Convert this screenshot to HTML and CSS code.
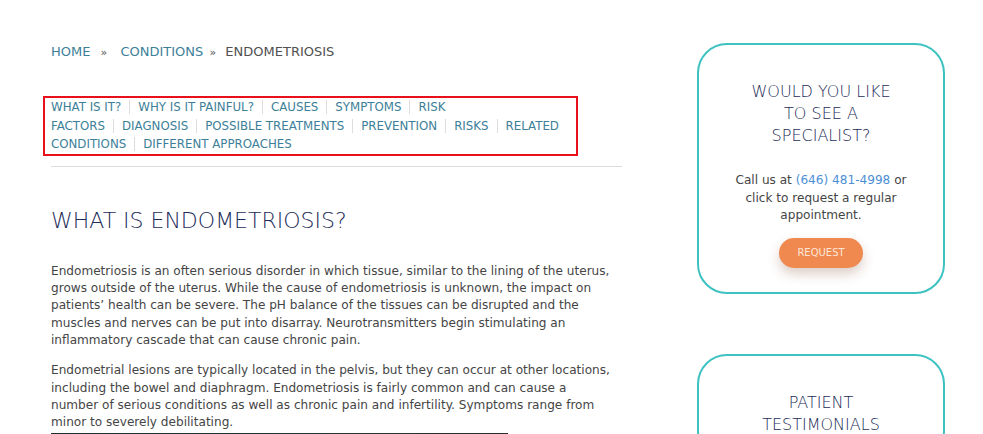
FILE: index.html
```html
<!DOCTYPE html>
<html>
<head>
    <link rel="stylesheet" href="styles.css">
</head>
<body>
    <div class="page">
        <div class="main">
            <div class="breadcrumb">
                <a href="#">Home</a>
                <span class="sep first">&raquo;</span>
                <a href="#">Conditions</a>
                <span class="sep">&raquo;</span>
                <span class="current">Endometriosis</span>
            </div>

            <div class="toc">
                <a href="#">What is it?</a><a href="#">Why is it painful?</a><a href="#">Causes</a><a href="#">Symptoms</a><a href="#">Risk Factors</a><a href="#">Diagnosis</a><a href="#">Possible Treatments</a><a href="#">Prevention</a><a href="#">Risks</a><a href="#">Related Conditions</a><a href="#">Different Approaches</a>
            </div>

            <h1>What is Endometriosis?</h1>

            <p>Endometriosis is an often serious disorder in which tissue, similar to the lining of the uterus, grows outside of the uterus. While the cause of endometriosis is unknown, the impact on patients&rsquo; health can be severe. The pH balance of the tissues can be disrupted and the muscles and nerves can be put into disarray. Neurotransmitters begin stimulating an inflammatory cascade that can cause chronic pain.</p>

            <p>Endometrial lesions are typically located in the pelvis, but they can occur at other locations, including the bowel and diaphragm. Endometriosis is fairly common and can cause a number of serious conditions as well as chronic pain and infertility. Symptoms range from minor to severely debilitating.</p>

            <div class="video"></div>
        </div>

        <div class="sidebar">
            <div class="card">
                <h3>Would you like to see a specialist?</h3>
                <p>Call us at <a href="#">(646) 481-4998</a> or click to request a regular appointment.</p>
                <a class="btn" href="#">Request</a>
            </div>
            <div class="card">
                <h3>Patient Testimonials</h3>
            </div>
        </div>
    </div>
</body>
</html>
```

FILE: styles.css
```css
body {
    margin: 0;
    font-family: "DejaVu Sans", sans-serif;
    color: #454545;
    background: #fff;
}
a {
    text-decoration: none;
}
.page {
    display: flex;
    gap: 75px;
    padding: 43px 38px 0 51px;
}
.main {
    width: 571px;
    flex-shrink: 0;
}
.breadcrumb {
    padding-top: 1px;
    font-size: 13px;
    text-transform: uppercase;
    line-height: 16px;
}
.breadcrumb a {
    color: #3d7f99;
}
.breadcrumb .sep {
    margin: 0 5px 0 2px;
    font-size: 11px;
    color: #555;
}
.breadcrumb .sep.first {
    margin: 0 9px 0 6px;
}
.breadcrumb .current {
    color: #505050;
}
.toc {
    margin: 35px 0 0 -8px;
    padding: 0 6px;
    width: 519px;
    border: 2px solid #e8101a;
    font-size: 11.8px;
    line-height: 18.5px;
    text-transform: uppercase;
}
.toc a {
    color: #3d7f99;
    padding-right: 8px;
    margin-right: 8px;
    border-right: 1px solid #ddd;
}
.toc a:last-child {
    border-right: none;
}
h1 {
    margin: 10px 0 0;
    padding-top: 40px;
    border-top: 1px solid #ddd;
    font-size: 22px;
    font-weight: 300;
    color: #1d2c58;
    text-transform: uppercase;
    line-height: 27px;
}
.main p {
    font-size: 12.1px;
    line-height: 17.4px;
    margin: 29px 0 0;
    padding-right: 6px;
}
.main p + p {
    margin-top: 12.6px;
}
.video {
    margin-top: 1px;
    width: 457px;
    height: 20px;
    background: linear-gradient(90deg, #1d2b2f 0%, #233338 60%, #2c2f33 62%, #2a2c30 100%);
}
.sidebar {
    display: flex;
    flex-direction: column;
    gap: 60px;
    width: 248px;
}
.card {
    border: 2px solid #3ec2c1;
    border-radius: 30px;
    padding: 36px 30px 24px;
    text-align: center;
}
.card h3 {
    margin: 0 14px;
    font-size: 16px;
    font-weight: 300;
    line-height: 22px;
    color: #1d2c58;
    text-transform: uppercase;
}
.card p {
    margin: 25px 0 0;
    font-size: 12.1px;
    line-height: 17.5px;
}
.card p a {
    color: #4d8fd6;
}
.btn {
    display: inline-block;
    margin-top: 13px;
    padding: 0 18px;
    line-height: 30px;
    border-radius: 15px;
    background: #f0894f;
    color: #fde6d8;
    font-size: 10px;
    text-transform: uppercase;
    box-shadow: 0 6px 12px rgba(120, 60, 30, 0.25);
}
```
